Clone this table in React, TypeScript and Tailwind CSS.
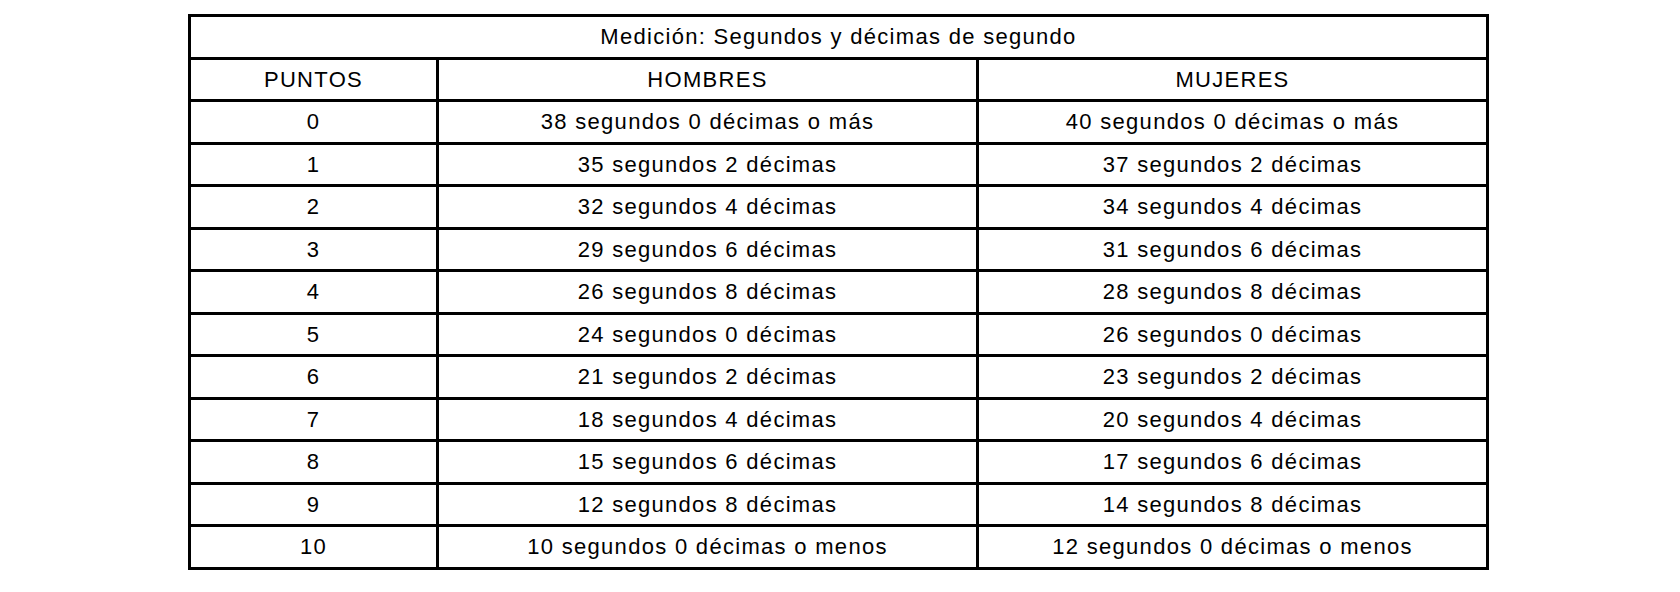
const rows: [string, string, string][] = [
  ["0", "38 segundos 0 décimas o más", "40 segundos 0 décimas o más"],
  ["1", "35 segundos 2 décimas", "37 segundos 2 décimas"],
  ["2", "32 segundos 4 décimas", "34 segundos 4 décimas"],
  ["3", "29 segundos 6 décimas", "31 segundos 6 décimas"],
  ["4", "26 segundos 8 décimas", "28 segundos 8 décimas"],
  ["5", "24 segundos 0 décimas", "26 segundos 0 décimas"],
  ["6", "21 segundos 2 décimas", "23 segundos 2 décimas"],
  ["7", "18 segundos 4 décimas", "20 segundos 4 décimas"],
  ["8", "15 segundos 6 décimas", "17 segundos 6 décimas"],
  ["9", "12 segundos 8 décimas", "14 segundos 8 décimas"],
  ["10", "10 segundos 0 décimas o menos", "12 segundos 0 décimas o menos"],
];

export default function App() {
  return (
    <div className="min-h-screen bg-white pl-[188px] pt-[14px] font-['Liberation_Sans',Arial,sans-serif] text-[22px] tracking-[1.3px] text-black">
      <table className="w-[1301px] border-collapse border-[3px] border-black text-center">
        <thead>
          <tr className="h-[42.5px]">
            <th colSpan={3} className="border-2 border-black p-0 font-normal">
              Medición: Segundos y décimas de segundo
            </th>
          </tr>
          <tr className="h-[42.5px]">
            <th className="w-[248px] border-[3px] border-black p-0 font-normal">PUNTOS</th>
            <th className="w-[540px] border-[3px] border-black p-0 font-normal">HOMBRES</th>
            <th className="border-[3px] border-black p-0 font-normal">MUJERES</th>
          </tr>
        </thead>
        <tbody>
          {rows.map((r) => (
            <tr key={r[0]} className="h-[42.5px]">
              <td className="border-[3px] border-black p-0">{r[0]}</td>
              <td className="border-[3px] border-black p-0">{r[1]}</td>
              <td className="border-[3px] border-black p-0">{r[2]}</td>
            </tr>
          ))}
        </tbody>
      </table>
    </div>
  );
}
